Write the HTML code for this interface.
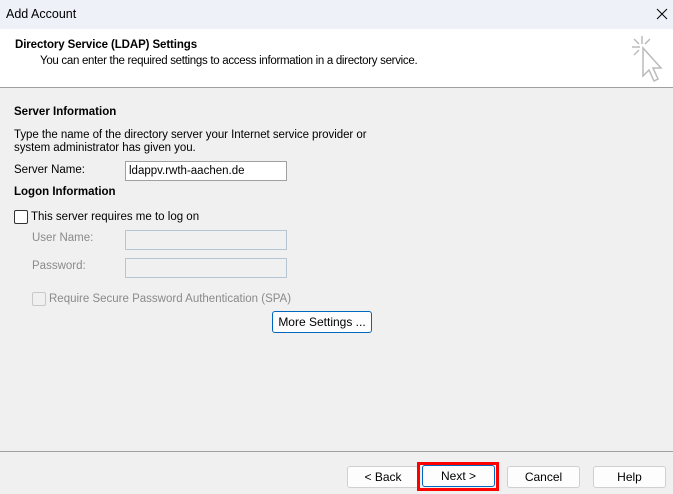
<html><head><style>
body{margin:0;width:673px;height:494px;background:#f0f0f0;font-family:"Liberation Sans",sans-serif;font-size:11.5px;color:#000;position:relative;overflow:hidden}
.a{position:absolute;white-space:nowrap}
.box{position:absolute;background:#fff;border:1px solid #a0a0a0;box-sizing:border-box}
.dis{background:#f0f0f0;border-color:#b6c4d4}
.btn{position:absolute;background:#fdfdfd;border:1px solid #d0d0d0;border-radius:3px;box-sizing:border-box;text-align:center;line-height:20px;font-size:12px}
.cb{position:absolute;width:12px;height:12px;border:1px solid #333;border-radius:2px;background:#fff}
</style></head><body>
<div class="a" style="left:0;top:0;width:673px;height:29px;background:#eef1f8"></div>
<div class="a" style="left:6px;top:7px;font-size:12.5px">Add Account</div>
<svg class="a" style="left:656px;top:8px" width="12" height="12"><path d="M1 1L11 11M11 1L1 11" stroke="#000" stroke-width="1"/></svg>
<div class="a" style="left:0;top:29px;width:673px;height:58px;background:#fff;border-bottom:1px solid #a0a0a0"></div>
<div class="a" style="left:15px;top:39px;font-weight:bold;font-size:11.5px;letter-spacing:-0.1px">Directory Service (LDAP) Settings</div>
<div class="a" style="left:40px;top:55px;font-size:11.5px;letter-spacing:-0.3px">You can enter the required settings to access information in a directory service.</div>
<svg class="a" style="left:628px;top:34px" width="36" height="50"><g stroke="#bbb" fill="none" stroke-width="1.5"><path d="M14 2v8M4 13h8M6 5l5 5M22 5l-5 5M6 21l5-5"/><path d="M15 14v28l6-6 5 11 4-2-5-11h8z" fill="#fff"/></g></svg>
<div class="a" style="left:14px;top:106px;font-weight:bold">Server Information</div>
<div class="a" style="left:14px;top:129px;letter-spacing:-0.05px">Type the name of the directory server your Internet service provider or</div>
<div class="a" style="left:14px;top:142px;letter-spacing:-0.05px">system administrator has given you.</div>
<div class="a" style="left:14px;top:164px">Server Name:</div>
<div class="box" style="left:125px;top:161px;width:162px;height:20px;padding:3px 3px">ldappv.rwth-aachen.de</div>
<div class="a" style="left:14px;top:186px;font-weight:bold">Logon Information</div>
<div class="cb" style="left:14px;top:210px"></div>
<div class="a" style="left:31px;top:211px">This server requires me to log on</div>
<div class="a" style="left:32px;top:232px;color:#8a8a8a">User Name:</div>
<div class="box dis" style="left:125px;top:230px;width:162px;height:20px"></div>
<div class="a" style="left:32px;top:260px;color:#8a8a8a">Password:</div>
<div class="box dis" style="left:125px;top:258px;width:162px;height:20px"></div>
<div class="cb" style="left:32px;top:292px;border-color:#c8c8c8;background:#f0f0f0"></div>
<div class="a" style="left:49px;top:293px;color:#8a8a8a">Require Secure Password Authentication (SPA)</div>
<div class="btn" style="left:272px;top:311px;width:100px;height:22px;border-color:#0067c0">More Settings ...</div>
<div class="a" style="left:0;top:451px;width:673px;border-top:1px solid #a0a0a0"></div>
<div class="btn" style="left:347px;top:466px;width:72px;height:22px">&lt; Back</div>
<div class="a" style="left:417px;top:462px;width:76px;height:23px;border:3px solid #f00"></div>
<div class="btn" style="left:422px;top:465px;width:73px;height:22px;border-color:#0067c0">Next &gt;</div>
<div class="btn" style="left:507px;top:466px;width:73px;height:22px">Cancel</div>
<div class="btn" style="left:593px;top:466px;width:73px;height:22px">Help</div>
</body></html>
